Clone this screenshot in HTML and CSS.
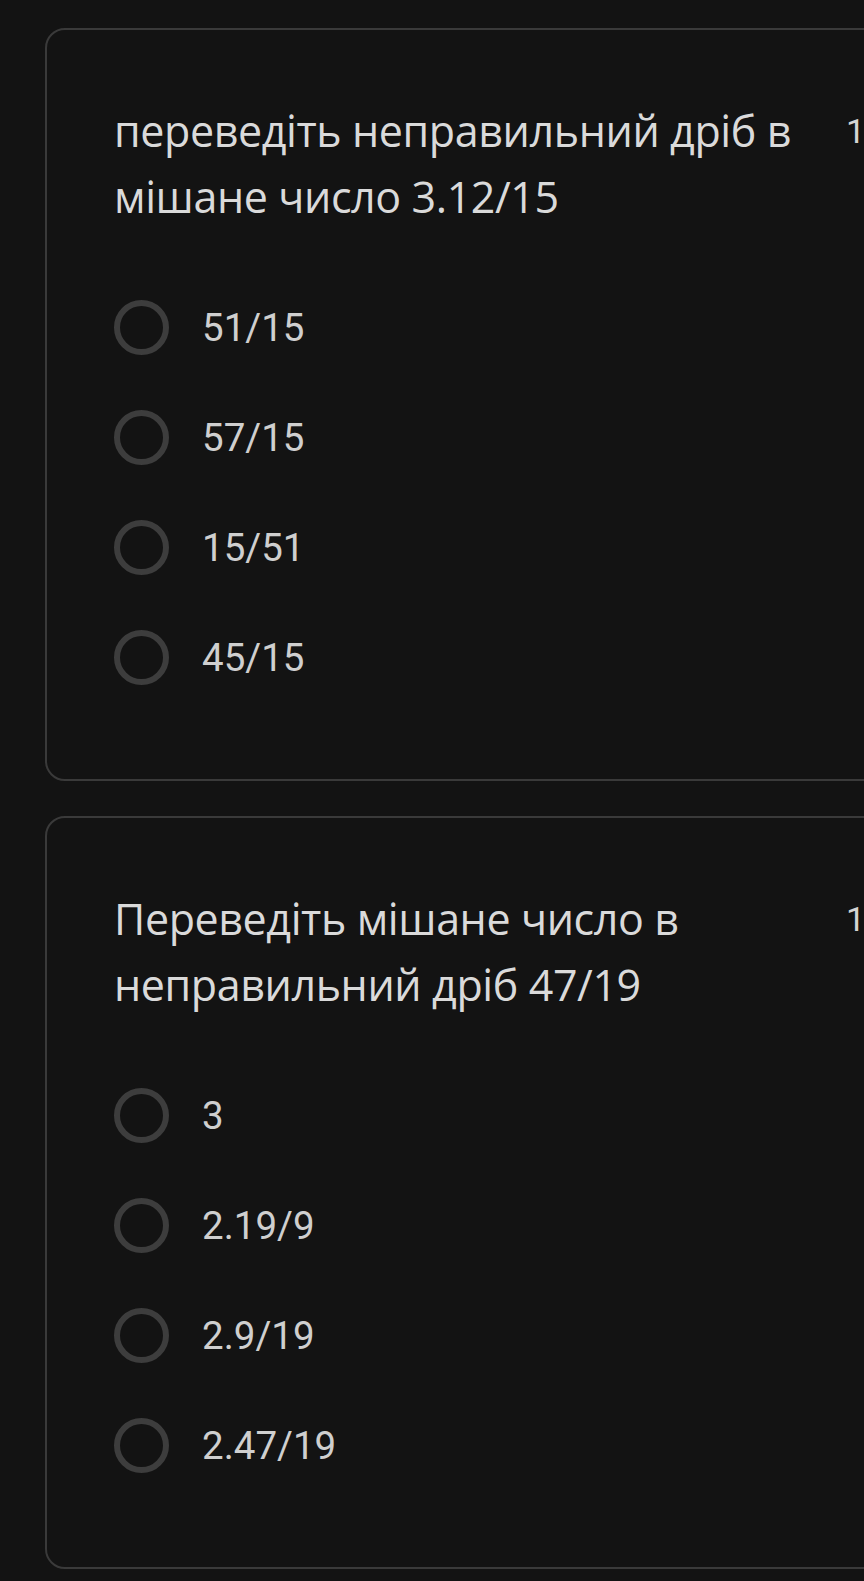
FILE: index.html
```html
<!DOCTYPE html>
<html lang="uk">
<head>
<meta charset="utf-8">
<title>Форма</title>
<link rel="stylesheet" href="styles.css">
</head>
<body>
<main class="page">
  <section class="card">
    <div class="head">
      <div class="title">переведіть неправильний дріб в<br>мішане число 3.12/15</div>
      <div class="points">1 бал</div>
    </div>
    <ul class="options">
      <li class="option"><span class="radio"></span><span class="label">51/15</span></li>
      <li class="option"><span class="radio"></span><span class="label">57/15</span></li>
      <li class="option"><span class="radio"></span><span class="label">15/51</span></li>
      <li class="option"><span class="radio"></span><span class="label">45/15</span></li>
    </ul>
  </section>
  <section class="card">
    <div class="head">
      <div class="title">Переведіть мішане число в<br>неправильний дріб 47/19</div>
      <div class="points">1 бал</div>
    </div>
    <ul class="options">
      <li class="option"><span class="radio"></span><span class="label">3</span></li>
      <li class="option"><span class="radio"></span><span class="label">2.19/9</span></li>
      <li class="option"><span class="radio"></span><span class="label">2.9/19</span></li>
      <li class="option"><span class="radio"></span><span class="label">2.47/19</span></li>
    </ul>
  </section>
</main>
</body>
</html>
```
FILE: styles.css
```css
html, body {
  margin: 0;
  padding: 0;
  background: #131313;
  overflow: hidden;
}
.page {
  padding: 28px 0 0 45px;
  display: flex;
  flex-direction: column;
  gap: 35px;
  width: 1100px;
}
.card {
  width: 1000px;
  height: 753px;
  box-sizing: border-box;
  border: 2px solid #3a3a3a;
  border-radius: 20px;
  background: #131313;
  padding: 68px 0 0 67px;
}
.head {
  display: flex;
  align-items: flex-start;
}
.title {
  width: 700px;
  font-family: "Open Sans", sans-serif;
  font-size: 43px;
  line-height: 66px;
  color: #dadada;
  letter-spacing: -0.4px;
}
.points {
  margin-left: 32px;
  font-family: Roboto, sans-serif;
  font-size: 34px;
  line-height: 66px;
  color: #d4d4d4;
  white-space: nowrap;
}
.options {
  list-style: none;
  margin: 0;
  padding: 0;
  margin-top: 42px;
}
.option {
  display: flex;
  align-items: center;
  height: 110px;
  gap: 33px;
}
.radio {
  width: 55px;
  height: 55px;
  box-sizing: border-box;
  border: 6px solid #3d3d3d;
  border-radius: 50%;
  flex: none;
}
.label {
  font-family: Roboto, sans-serif;
  font-size: 38.5px;
  color: #cfcfcf;
}
```
